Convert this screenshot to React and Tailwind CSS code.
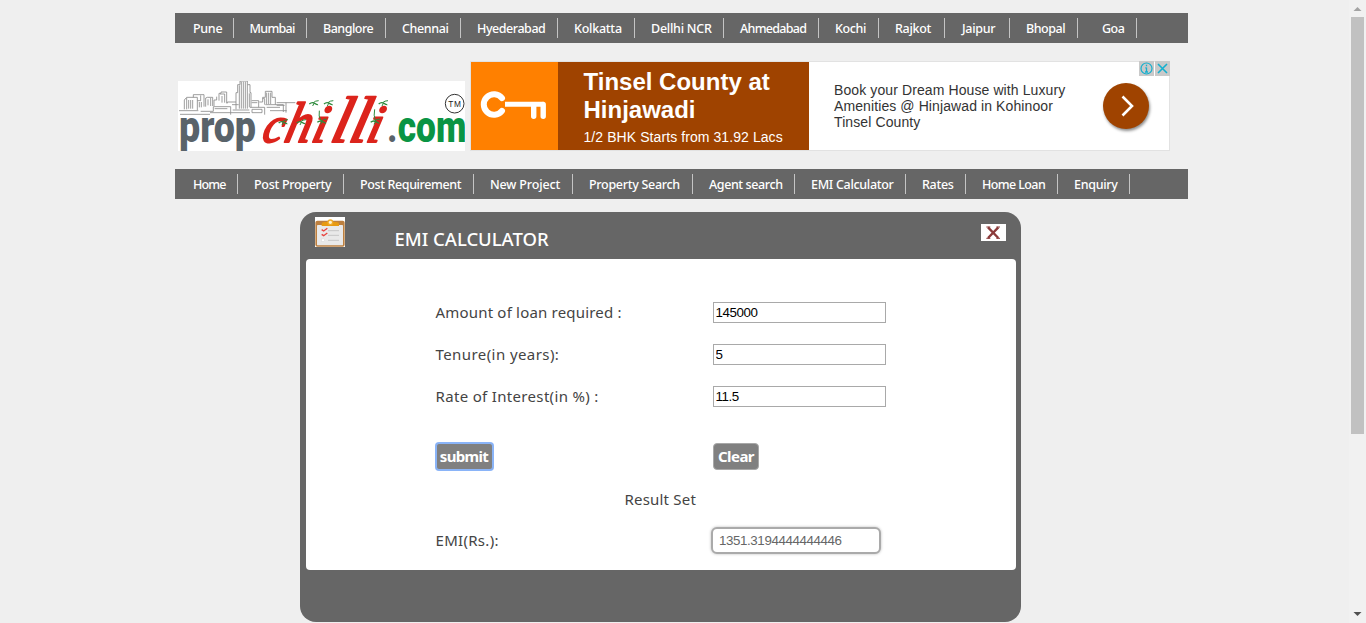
import React from "react";

const cities = [
  ["Pune", "w-[59px] pl-[18px]"],
  ["Mumbai", "w-[73px] pl-[15.5px] tracking-[-0.7px]"],
  ["Banglore", "w-[79px] pl-4 tracking-[-0.5px]"],
  ["Chennai", "w-[75px] pl-4 tracking-[-0.4px]"],
  ["Hyederabad", "w-[97px] pl-4 tracking-[-0.45px]"],
  ["Kolkatta", "w-[77px] pl-4 tracking-[-0.25px]"],
  ["Dellhi NCR", "w-[89px] pl-4 tracking-[-0.25px]"],
  ["Ahmedabad", "w-[95px] pl-4 tracking-[-0.7px]"],
  ["Kochi", "w-[60px] pl-4 tracking-[-0.4px]"],
  ["Rajkot", "w-[66px] pl-4"],
  ["Jaipur", "w-[65px] pl-[17px]"],
  ["Bhopal", "w-[68px] pl-4 tracking-[-0.45px]"],
  ["Goa", "w-[59px] pl-6 tracking-[-0.5px]"],
];

const sections = [
  ["Home", "w-[63px] pl-[18px] tracking-[-0.9px]"],
  ["Post Property", "w-[106px] pl-4"],
  ["Post Requirement", "w-[130px] pl-4 tracking-[-0.38px]"],
  ["New Project", "w-[99px] pl-4 tracking-[-0.15px]"],
  ["Property Search", "w-[120px] pl-4"],
  ["Agent search", "w-[102px] pl-4 tracking-[-0.4px]"],
  ["EMI Calculator", "w-[111px] pl-4"],
  ["Rates", "w-[60px] pl-4"],
  ["Home Loan", "w-[92px] pl-4 tracking-[-0.6px]"],
  ["Enquiry", "w-[72px] pl-4"],
];

function NavBar({ items }) {
  return (
    <nav className="flex h-[30px] w-[1013px] items-center bg-[#666] tracking-[-0.3px]">
      {items.map(([label, size]) => (
        <a
          key={label}
          className={`block h-5 shrink-0 whitespace-nowrap border-r border-[#c4c4c4] text-[12.5px] font-medium leading-[21px] text-white ${size}`}
        >
          {label}
        </a>
      ))}
    </nav>
  );
}

function Stem({ x, y }) {
  return (
    <g transform={`translate(${x} ${y})`} stroke="#2e8b3d" fill="none" strokeWidth="4">
      <path d="M-12 4Q-4-3 4 2T14 6" />
      <path d="M0 0Q6-6 16-6M2 2L-2 10" strokeWidth="3" />
    </g>
  );
}

function Logo() {
  return (
    <svg className="mt-5 h-[70px] w-[287px] bg-white" viewBox="24 33 861 210">
      <g fill="none" stroke="#8a8a8a" strokeWidth="2.5">
        <path d="M27 122H85M30 133H120M43 118V90L50 82H82V120M50 84V118M70 82V74H102V84M82 92H92V76M102 84V110M107 110V84L112 82H128V108M122 84V108M132 108V90H140V80M147 92V70H153V66H170V100M150 72H164V98M172 100V96H198" />
        <path d="M198 118V68H203V44H210V33H232V44H240V68H243V112M208 46V116M214 35V116M220 35V116M226 35V116M232 44V116M238 70V112" />
        <path d="M245 92H266V112M245 98H262M268 96H278V82H286V64H306V82H316V104M290 68V102M296 68V102M302 68V102M278 86H284V104M240 112H284V134M246 118H276V128H246ZM286 104H340V126M290 112H330M320 98H376M348 98V128M320 106H344M300 122H350" />
        <path d="M92 124H130V110H182V134M134 116H172M186 104H206M120 128H240M188 120H238M56 90V116M62 90V116M68 90V116M88 96V112M94 96V112M114 88V106M156 78V98" />
      </g>
      <g fontFamily="Roboto, 'Liberation Sans', sans-serif" fontWeight="900">
        <text x="27" y="215" fontSize="134" fill="#59636a" textLength="231" lengthAdjust="spacingAndGlyphs">prop</text>
        <text x="652" y="215" fontSize="120" fill="#59636a" textLength="30" lengthAdjust="spacingAndGlyphs">.</text>
        <text x="683" y="215" fontSize="134" fill="#0a9444" textLength="206" lengthAdjust="spacingAndGlyphs">com</text>
      </g>
      <g
        fontFamily="'Liberation Serif', serif"
        fontStyle="italic"
        fill="#dc241c"
        stroke="#dc241c"
        strokeWidth="6"
        strokeLinejoin="round"
        transform="translate(0 215) skewX(-14)"
      >
        <text x="272" y="0" fontSize="150" textLength="62" lengthAdjust="spacingAndGlyphs">c</text>
        <text x="338" y="0" fontSize="172" textLength="78" lengthAdjust="spacingAndGlyphs">h</text>
        <text x="420" y="0" fontSize="160" textLength="44" lengthAdjust="spacingAndGlyphs">i</text>
        <text x="476" y="0" fontSize="196" textLength="112" lengthAdjust="spacingAndGlyphs">ll</text>
        <text x="584" y="0" fontSize="160" textLength="44" lengthAdjust="spacingAndGlyphs">i</text>
      </g>
      <Stem x={338} y={155} />
      <Stem x={430} y={98} />
      <Stem x={392} y={155} />
      <Stem x={454} y={153} />
      <Stem x={474} y={98} />
      <Stem x={614} y={153} />
      <Stem x={638} y={98} />
      <path d="M448 122Q444 138 454 154M614 118Q610 136 616 152" stroke="#2e8b3d" strokeWidth="3" fill="none" />
      <circle cx="854" cy="101" r="28" fill="#fff" stroke="#333" strokeWidth="3" />
      <text x="835" y="110" fontSize="25" fontFamily="'Liberation Sans', sans-serif" fill="#222" textLength="38">TM</text>
    </svg>
  );
}

function KeyIcon() {
  return (
    <svg className="h-[90px] w-[87px]" viewBox="0 0 87 90" fill="none" stroke="#fff" strokeLinecap="round">
      <path d="M31 37.2A10.2 10.2 0 1 0 31 49.8" strokeWidth="6" />
      <path d="M34 43.3H72.5" strokeWidth="5" strokeLinecap="butt" />
      <path d="M62.7 44V55.2M72.2 43.5V55.2" strokeWidth="5.4" />
    </svg>
  );
}

function AdBanner() {
  return (
    <div className="relative flex h-[90px] w-[700px] border border-[#e2e2e2] bg-white font-['Liberation_Sans',Arial,sans-serif]">
      <div className="flex w-[87px] items-center bg-[#ff8000]">
        <KeyIcon />
      </div>
      <div className="w-[251px] bg-[#9f4300] pl-[25.5px] pt-[6px] text-white">
        <div className="text-[24px] font-bold leading-[28px]">
          Tinsel County at
          <br />
          Hinjawadi
        </div>
        <div className="mt-[4px] whitespace-nowrap text-[14px] leading-[18px] tracking-[0.08px]">1/2 BHK Starts from 31.92 Lacs</div>
      </div>
      <div className="whitespace-nowrap pl-[25px] pt-[20px] text-[14px] leading-[16px] tracking-[0.1px] text-[#333]">
        Book your Dream House with Luxury
        <br />
        Amenities @ Hinjawad in Kohinoor
        <br />
        Tinsel County
      </div>
      <div className="absolute left-[632px] top-[21px] flex size-[46px] items-center justify-center rounded-full bg-[#9f4300] shadow-[1px_2px_3px_rgba(0,0,0,0.45)]">
        <svg className="size-[46px]" viewBox="0 0 46 46" fill="none" stroke="#fff" strokeWidth="2.6">
          <path d="M19.5 13.5L29 23L19.5 32.5" />
        </svg>
      </div>
      <div className="absolute -top-px right-[-1px] flex gap-px">
        <svg className="size-[15px] bg-[#c9c9c9]" viewBox="0 0 15 15" fill="none" stroke="#14b0cf">
          <circle cx="7.5" cy="7.5" r="5.5" strokeWidth="1.2" />
          <path d="M7.5 6.5V11M7.5 3.7V5.2M6.3 6.8H7.5M6 11H9" strokeWidth="1.3" />
        </svg>
        <svg className="size-[15px] bg-[#c9c9c9]" viewBox="0 0 15 15" fill="none" stroke="#14b0cf" strokeWidth="1.6">
          <path d="M3 3L12 12M12 3L3 12" />
        </svg>
      </div>
    </div>
  );
}

function ClipboardIcon() {
  return (
    <svg className="size-[30px] bg-white" viewBox="0 0 90 90">
      <rect x="1" y="11" width="88" height="78" rx="6" fill="#bd8040" />
      <rect x="6" y="24" width="78" height="61" rx="2" fill="#e9e9e9" />
      <path d="M20 27V20Q20 15 28 15H62Q72 15 72 20V27Z" fill="#e79a12" />
      <circle cx="46" cy="16" r="7" fill="#fff3cf" stroke="#f0ab2c" strokeWidth="4" />
      <path d="M39 41H72M39 55H72M39 70H72" stroke="#c6c6c6" strokeWidth="3" />
      <path d="M20 38L26 42L37 34M20 52L26 56L37 48" stroke="#e8433f" strokeWidth="4" fill="none" />
      <rect x="20" y="66" width="8" height="7" fill="#fff" stroke="#d0d0d0" />
    </svg>
  );
}

function Field({ label, value, spacing }) {
  return (
    <div className="flex h-[42px] items-center">
      <label className={`w-[277px] ${spacing}`}>{label}</label>
      <input
        className="h-[21px] w-[173.5px] border border-[#a9a9a9] bg-white px-[2px] font-['Liberation_Sans',Arial,sans-serif] text-[13.33px] tracking-[-0.4px] text-black outline-none"
        defaultValue={value}
      />
    </div>
  );
}

function Calculator() {
  return (
    <section className="ml-[125px] mt-[13px] flex h-[410px] w-[721px] flex-col rounded-[16px] bg-[#666] px-[6px]">
      <header className="flex h-[47px] shrink-0 items-start pl-[9px] pr-[9px]">
        <div className="mt-[5px]">
          <ClipboardIcon />
        </div>
        <h1 className="ml-[49.5px] mt-[14px] whitespace-nowrap text-[18.5px] font-medium leading-[26px] tracking-[-0.02px] text-white">
          EMI CALCULATOR
        </h1>
        <button className="ml-auto mt-[12px] flex h-[17px] w-[25px] items-center justify-center bg-white">
          <svg className="h-[17px] w-[25px]" viewBox="0 0 75 51" fill="none" stroke="#8b3a3a">
            <path d="M21 10L52 42M52 10L21 42" strokeWidth="7" />
            <path d="M16 9H28M46 9H57M16 43H28M46 43H57" strokeWidth="3" />
          </svg>
        </button>
      </header>
      <div className="h-[311px] w-[710px] rounded-[4px] bg-white pl-[129.5px] pt-[32px] text-[15px] text-[#444]">
        <Field label="Amount of loan required :" value="145000" spacing="tracking-[0.19px]" />
        <Field label="Tenure(in years):" value="5" spacing="tracking-[0.42px]" />
        <Field label="Rate of Interest(in %) :" value="11.5" spacing="tracking-[0.33px]" />
        <div className="mt-[24px] flex h-[30px] items-center text-[15px] font-bold text-white">
          <div className="w-[277.5px]">
            <button className="h-[27px] w-[57px] rounded-[3px] border border-[#8ab4f8] bg-[#808080] tracking-[-0.65px] shadow-[0_0_0_1px_#8ab4f8]">submit</button>
          </div>
          <button className="h-[27px] w-[46px] rounded-[4px] border border-[#a8a8a8] bg-[#808080] tracking-[-0.55px]">Clear</button>
        </div>
        <div className="mt-[18px] pl-[189px] leading-[20px] tracking-[0.2px]">Result Set</div>
        <div className="mt-[16.5px] flex h-[30px] items-center">
          <label className="w-[275.5px] tracking-[0.3px]">EMI(Rs.):</label>
          <input
            className="h-[27px] w-[170px] rounded-[6px] border-2 border-[#aaa] bg-white px-[6px] font-['Liberation_Sans',Arial,sans-serif] text-[13.33px] tracking-[-0.4px] text-[#666] shadow-[0_0_3px_#bbb] outline-none"
            defaultValue="1351.3194444444446"
          />
        </div>
      </div>
    </section>
  );
}

function ScrollBar() {
  return (
    <div className="flex h-full w-[17px] shrink-0 flex-col items-center bg-[#f1f1f1]">
      <svg className="h-[17px] w-[17px]" viewBox="0 0 17 17">
        <path d="M4.5 11H12.5L8.5 7Z" fill="#a3a3a3" />
      </svg>
      <div className="h-[417px] w-[13px] bg-[#c1c1c1]" />
      <svg className="mt-auto h-[17px] w-[17px]" viewBox="0 0 17 17">
        <path d="M4.5 6H12.5L8.5 10Z" fill="#505050" />
      </svg>
    </div>
  );
}

export default function App() {
  return (
    <div className="flex h-[623px] w-[1366px] overflow-hidden bg-[#efefef] font-['Trebuchet_MS','Noto_Sans',sans-serif]">
      <main className="w-[1349px] shrink-0 pl-[175px] pt-[13px]">
        <NavBar items={cities} />
        <div className="mb-[18px] mt-[18px] flex gap-[5px] pl-[3px]">
          <Logo />
          <AdBanner />
        </div>
        <NavBar items={sections} />
        <Calculator />
      </main>
      <ScrollBar />
    </div>
  );
}
